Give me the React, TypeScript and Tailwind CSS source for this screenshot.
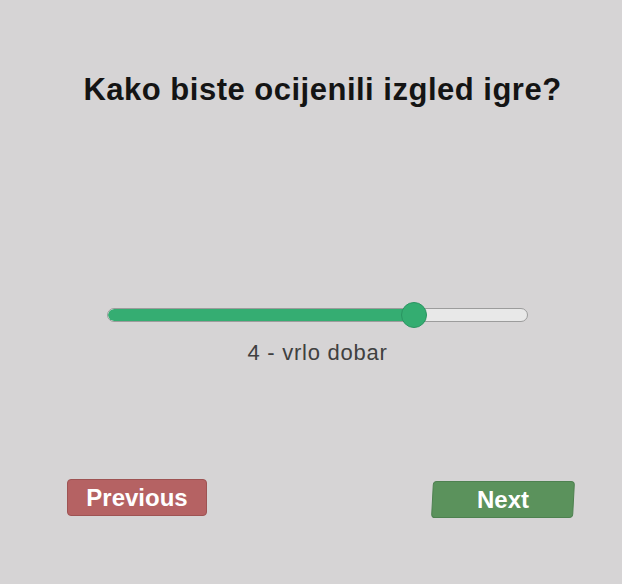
export default function App() {
    const value = 4;
    const pct = 73; // thumb position along the track, %

    return (
        <div className="w-full h-[584px] bg-[#d6d4d5] flex flex-col" style={{ fontFamily: '"Liberation Sans", Arial, sans-serif' }}>
            <div className="mt-[74px] pl-[23px] text-center text-[31px] leading-none font-bold tracking-[0.5px] text-[#141414]">
                Kako biste ocijenili izgled igre?
            </div>

            {/* slider */}
            <div className="mt-[197px] ml-[107px] w-[421px] h-[26px] relative flex items-center">
                <div className="w-full h-[14px] rounded-full bg-[#e8e8e8] border border-[#9c9c9c] overflow-hidden">
                    <div className="h-full bg-[#35ad72] rounded-full border-r border-[#2b8e5d]" style={{ width: `${pct}%` }} />
                </div>
                <div
                    className="absolute top-0 w-[26px] h-[26px] -ml-[13px] rounded-full bg-[#34ad71] border border-[#2a9461]"
                    style={{ left: `${pct}%` }}
                />
            </div>

            <div className="mt-[14px] ml-[107px] w-[421px] text-center text-[22px] leading-none tracking-[0.75px] text-[#404040]">
                {value} - vrlo dobar
            </div>

            <div className="mt-[115px] flex flex-row items-start">
                <button className="ml-[67px] w-[140px] h-[37px] rounded-[4px] bg-[#b56263] border border-[#9e5353] text-white font-bold text-[24px] leading-none flex items-center justify-center">
                    Previous
                </button>
                <button className="ml-[225px] mt-[2px] w-[142px] h-[37px] rounded-[4px] bg-[#5b925c] border border-[#4e8150] text-white font-bold text-[24px] leading-none flex items-center justify-center -skew-x-3">
                    <span className="skew-x-3">Next</span>
                </button>
            </div>
        </div>
    );
}
